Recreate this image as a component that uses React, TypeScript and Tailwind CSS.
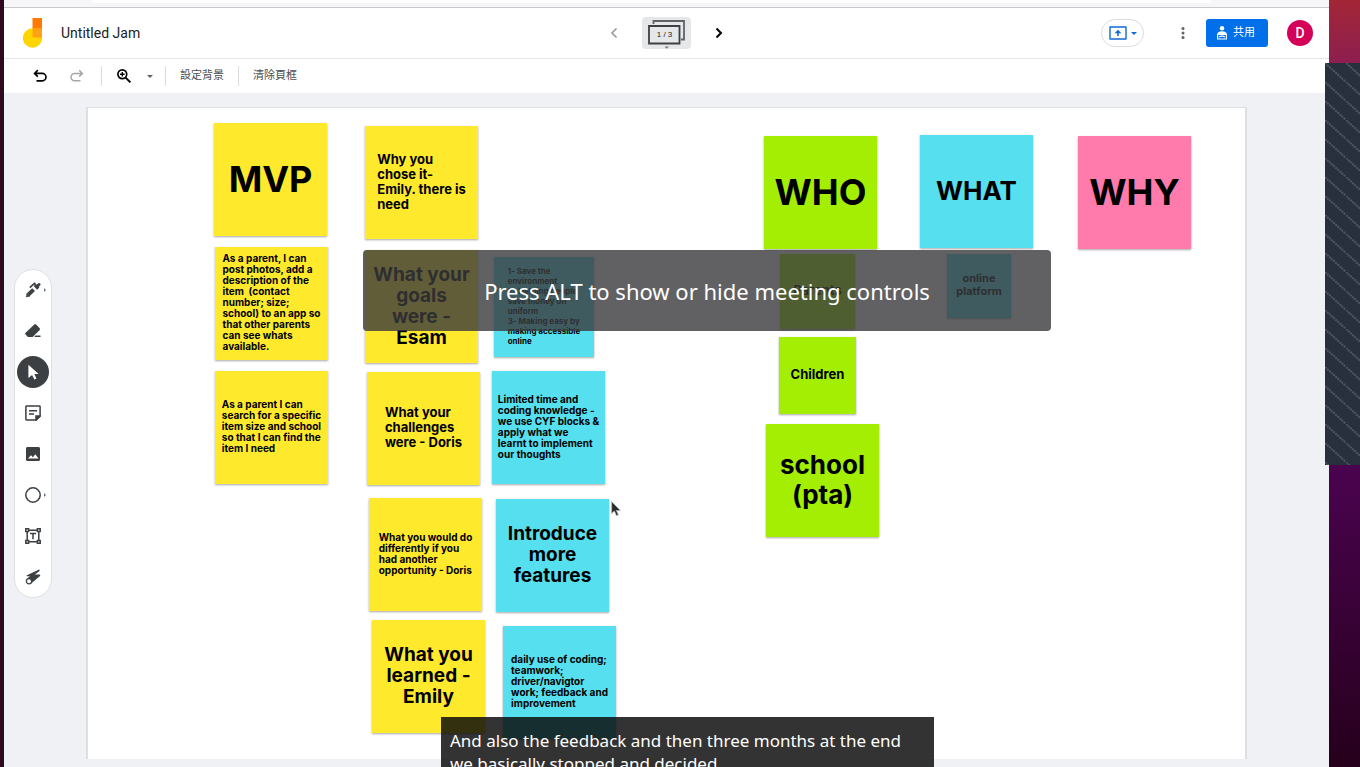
import React from 'react';

type Note = { box: string; type: string; color: string; lines: string[] };

const YELLOW = 'bg-[#ffe92c]';
const CYAN = 'bg-[#56dfee]';
const GREEN = 'bg-[#a3ee02]';
const PINK = 'bg-[#ff7bac]';

const HUGE = 'text-4xl leading-10 text-center';
const LARGE = 'text-[26px] leading-[30px] text-center';
const MEDIUM = 'text-[19px] leading-[21px] text-center';
const BODY = 'text-[13px] leading-[15px]';
const LABEL = 'text-[13px] leading-[15px] text-center';
const LABEL_SMALL = 'text-[11px] leading-[13px] text-center';
const SMALL = 'text-[10px] leading-[11px]';
const TINY = 'text-[8px] leading-[10px]';

const notes: Note[] = [
  { box: 'left-[126px] top-[15px] size-[113px]', type: HUGE, color: YELLOW, lines: ['MVP'] },
  { box: 'left-[277px] top-[18px] size-[113px]', type: BODY, color: YELLOW, lines: ['Why you', 'chose it-', 'Emily. there is', 'need'] },
  {
    box: 'left-[127px] top-[139px] size-[113px]', type: SMALL, color: YELLOW,
    lines: ['As a parent, I can', 'post photos, add a', 'description of the', 'item  (contact', 'number; size;', 'school) to an app so', 'that other parents', 'can see whats', 'available.'],
  },
  { box: 'left-[277px] top-[142px] size-[113px]', type: MEDIUM, color: YELLOW, lines: ['What your', 'goals', 'were -', 'Esam'] },
  {
    box: 'left-[406px] top-[149px] size-[100px]', type: TINY, color: CYAN,
    lines: ['1- Save the', 'environment', '2- Helping people', 'save money on', 'uniform', '3- Making easy by', 'making accessible', 'online'],
  },
  { box: 'left-[127px] top-[263px] size-[113px]', type: SMALL, color: YELLOW, lines: ['As a parent I can', 'search for a specific', 'item size and school', 'so that I can find the', 'item I need'] },
  { box: 'left-[279px] top-[264px] size-[113px]', type: BODY, color: YELLOW, lines: ['What your', 'challenges', 'were - Doris'] },
  {
    box: 'left-[404px] top-[263px] size-[113px]', type: SMALL, color: CYAN,
    lines: ['Limited time and', 'coding knowledge -', 'we use CYF blocks &', 'apply what we', 'learnt to implement', 'our thoughts'],
  },
  { box: 'left-[281px] top-[390px] size-[113px]', type: SMALL, color: YELLOW, lines: ['What you would do', 'differently if you', 'had another', 'opportunity - Doris'] },
  { box: 'left-[408px] top-[391px] size-[113px]', type: MEDIUM, color: CYAN, lines: ['Introduce', 'more', 'features'] },
  { box: 'left-[284px] top-[512px] size-[113px]', type: MEDIUM, color: YELLOW, lines: ['What you', 'learned -', 'Emily'] },
  { box: 'left-[415px] top-[518px] size-[113px]', type: SMALL, color: CYAN, lines: ['daily use of coding;', 'teamwork;', 'driver/navigtor', 'work; feedback and', 'improvement'] },
  { box: 'left-[676px] top-[28px] size-[113px]', type: HUGE, color: GREEN, lines: ['WHO'] },
  { box: 'left-[832px] top-[27px] size-[113px]', type: LARGE, color: CYAN, lines: ['WHAT'] },
  { box: 'left-[990px] top-[28px] size-[113px]', type: HUGE, color: PINK, lines: ['WHY'] },
  { box: 'left-[692px] top-[146px] size-[75px]', type: LABEL, color: GREEN, lines: ['Parents'] },
  { box: 'left-[859px] top-[146px] size-[64px]', type: LABEL_SMALL, color: CYAN, lines: ['online', 'platform'] },
  { box: 'left-[691px] top-[229px] size-[77px]', type: LABEL, color: GREEN, lines: ['Children'] },
  { box: 'left-[678px] top-[316px] size-[113px]', type: LARGE, color: GREEN, lines: ['school', '(pta)'] },
];

function StickyNote({ note }: { note: Note }) {
  return (
    <article className={`absolute flex items-center justify-center pb-[2px] shadow-[0_1px_2px_rgba(0,0,0,0.35)] ${note.box} ${note.color}`}>
      <p className={`whitespace-pre font-bold text-black ${note.type}`}>{note.lines.join('\n')}</p>
    </article>
  );
}

function Caret({ className }: { className: string }) {
  return (
    <svg viewBox="0 0 8 4" className={className} aria-hidden="true">
      <path d="M0 0h8L4 4z" fill="currentColor" />
    </svg>
  );
}

function Logo() {
  return (
    <svg viewBox="0 0 20 30" className="h-[30px] w-5" aria-hidden="true">
      <circle cx="9.5" cy="20" r="9.7" fill="#ffd500" />
      <path d="M9.5 0H19v10H9.5z" fill="#ff7a00" />
      <path d="M9.5 10H19v9.5H9.5z" fill="#ffa114" />
    </svg>
  );
}

const tools: { label: string; more?: boolean; active?: boolean; icon: React.ReactNode }[] = [
  {
    label: 'Pen',
    more: true,
    icon: (
      <g fill="none" stroke="currentColor">
        <path d="M3.200 12.800L8.600 7.600" strokeWidth="4" />
        <path d="M1 15.200l.6-4.200 3.600 3.500z" fill="currentColor" stroke="none" />
        <path d="M10.400 5.900l2.300-2.200" strokeWidth="5" strokeLinejoin="round" />
        <path d="M12.600 3.800l1.400-1.300" strokeWidth="3" strokeLinecap="round" />
        <path d="M4.800 5.600L9.400 1.400l1.200 1.200" strokeWidth="1.600" />
      </g>
    ),
  },
  {
    label: 'Eraser',
    icon: (
      <g fill="currentColor">
        <path d="M.6 9.700L9.300 1.600c.6-.5 1.200-.5 1.800 0l3.600 3.600c.5.6.5 1.200 0 1.800l-7 7H2.900L.6 11.600c-.6-.6-.6-1.300 0-1.900z" />
        <path d="M10.500 12.600h5V14h-6.300z" />
      </g>
    ),
  },
  { label: 'Select', active: true, icon: <path d="M3.400.8l10.200 9.100H9.300l2.200 4.500-2.200 1-2.200-4.500-3.700 3z" fill="currentColor" /> },
  {
    label: 'Sticky note',
    icon: (
      <g fill="none" stroke="currentColor" strokeWidth="1.500">
        <path d="M1.600 1h12.800c.4 0 .7.3.7.7v9.400L11.200 15H1.600c-.4 0-.7-.3-.7-.7V1.700c0-.4.3-.7.7-.7z" />
        <path d="M4 5.800h8M4 9h5" />
        <path d="M11 15v-4h4z" fill="currentColor" />
      </g>
    ),
  },
  {
    label: 'Add image',
    icon: <path fillRule="evenodd" fill="currentColor" d="M2.500 1h11c.8 0 1.500.7 1.500 1.500v11c0 .8-.7 1.500-1.500 1.500h-11C1.700 15 1 14.300 1 13.500v-11C1 1.700 1.700 1 2.500 1zM3 12.500h10.500L10.300 8.200l-2.400 3-1.900-2z" />,
  },
  { label: 'Shape', more: true, icon: <circle cx="8" cy="8" r="7.200" fill="none" stroke="currentColor" strokeWidth="1.500" /> },
  {
    label: 'Text box',
    icon: (
      <g fill="none" stroke="currentColor" strokeWidth="1.500">
        <path d="M3 2.200h10M3 13.800h10M2.200 3v10M13.800 3v10M5 5.500h6M8 5.500v5.700" />
        <path d="M.8.800h2.800v2.800H.8zM12.400.800h2.800v2.800h-2.800zM.8 12.400h2.800v2.800H.8zM12.400 12.400h2.800v2.800h-2.800z" fill="white" />
      </g>
    ),
  },
  {
    label: 'Laser',
    icon: (
      <g>
        <path d="M2 6.200L13.600.7c1-.4 1.600.9.700 1.500L9.800 5.400l4.600.1c1 .1 1.200 1.200.4 1.700L7 13.800 2.200 9.500l2.700-2.300H2.300c-.8 0-1-.7-.3-1z" fill="currentColor" />
        <circle cx="4" cy="12.200" r="2.600" fill="white" stroke="currentColor" strokeWidth="1.300" />
      </g>
    ),
  },
];

function ToolRail() {
  return (
    <nav aria-label="Tools" className="flex flex-col gap-[9px] rounded-full border border-[#dfe1e5] bg-white px-[2px] py-1">
      {tools.map((tool) => (
        <button
          key={tool.label}
          type="button"
          aria-label={tool.label}
          className={`relative flex size-8 items-center justify-center rounded-full ${tool.active ? 'bg-[#3c4043] text-white' : 'text-[#3c4043]'}`}
        >
          <svg viewBox="0 0 16 16" className="size-4" aria-hidden="true">{tool.icon}</svg>
          {tool.more && <Caret className="absolute right-[2px] top-[15px] h-[2px] w-1 -rotate-90 text-gray-500" />}
        </button>
      ))}
    </nav>
  );
}

function Header() {
  return (
    <header className="grid h-[51px] shrink-0 grid-cols-[1fr_auto_1fr] items-center border-b border-[#e4e5e7] bg-white">
      <div className="flex items-center gap-[18px] pl-[19px]">
        <Logo />
        <h1 className="text-sm text-[#202124]">Untitled Jam</h1>
      </div>
      <div className="flex items-center gap-5">
        <button type="button" aria-label="Previous frame" className="flex size-4 items-center justify-center text-[#9a9a9a]">
          <svg viewBox="0 0 16 16" className="size-4" fill="none" stroke="currentColor" strokeWidth="1.700" aria-hidden="true"><path d="M10.500 3.500L6 8l4.500 4.500" /></svg>
        </button>
        <button type="button" aria-label="Frame 1 of 3" className="relative flex h-8 w-[49px] items-center justify-center rounded bg-[#e6e7e9] font-['Liberation_Sans',sans-serif] text-[8px] text-[#202124]">
          <svg viewBox="0 0 49 32" className="absolute inset-0 h-8 w-[49px]" fill="none" aria-hidden="true">
            <path d="M11.500 7V4H42v18.500h-3" stroke="#5f6368" strokeWidth="1.800" />
            <path d="M7 9h30.500v17.500H7z" stroke="#3c4043" strokeWidth="1.800" />
            <path d="M22.500 29.500h4.500l-2.200 2.200z" fill="#777" />
          </svg>
          <span className="relative pr-1 pt-[3px]">1 / 3</span>
        </button>
        <button type="button" aria-label="Next frame" className="flex size-4 items-center justify-center text-black">
          <svg viewBox="0 0 16 16" className="size-4" fill="none" stroke="currentColor" strokeWidth="2" aria-hidden="true"><path d="M5.500 3.500L10 8l-4.500 4.500" /></svg>
        </button>
      </div>
      <div className="flex items-center justify-end pr-4">
        <button type="button" aria-label="Present" className="flex h-7 w-[43px] items-center justify-center gap-1 rounded-full border border-[#dadce0] text-[#1268d8]">
          <svg viewBox="0 0 18 14" className="h-[14px] w-[18px]" aria-hidden="true">
            <path d="M1 1h16v12H1z" fill="none" stroke="currentColor" strokeWidth="1.400" strokeLinejoin="round" />
            <path d="M9 3.700L5.600 7.200h2.600V10h1.600V7.200h2.600z" fill="currentColor" />
          </svg>
          <Caret className="h-[3px] w-[6px]" />
        </button>
        <button type="button" aria-label="More options" className="ml-[27px] mr-[11px] flex size-6 items-center justify-center text-[#5f6368]">
          <svg viewBox="0 0 4 14" className="h-[14px] w-1" fill="currentColor" aria-hidden="true">
            <circle cx="2" cy="2.500" r="1.500" /><circle cx="2" cy="7" r="1.500" /><circle cx="2" cy="11.500" r="1.500" />
          </svg>
        </button>
        <button type="button" className="mr-[19px] flex h-7 w-[62px] items-center justify-center gap-[6px] rounded-[3px] bg-[#0070ea] pr-[2px] text-[11px] text-white">
          <svg viewBox="0 0 10 14" className="h-[14px] w-[10px]" aria-hidden="true">
            <circle cx="5" cy="2.200" r="2.200" fill="white" />
            <path d="M0 9c0-2.600 2-3.700 5-3.700S10 6.400 10 9z" fill="white" />
            <path d="M.6 9v4h8.800V9M2 11.200c1.500-1.400 4.500-1.400 6 0" fill="none" stroke="white" strokeWidth="1.100" />
          </svg>
          共用
        </button>
        <button type="button" aria-label="Account" className="flex size-[26px] items-center justify-center rounded-full bg-[#d50057] text-sm font-medium text-white">D</button>
      </div>
    </header>
  );
}

function EditBar() {
  return (
    <div role="toolbar" aria-label="Edit" className="flex h-[34px] shrink-0 items-center bg-white text-[11px] text-[#4a4d51]">
      <button type="button" aria-label="Undo" className="ml-7 flex size-4 items-center justify-center text-black">
        <svg viewBox="0 0 16 16" className="size-4" fill="none" stroke="currentColor" strokeWidth="1.700" aria-hidden="true">
          <path d="M5.800 2.200L2.600 5.400l3.200 3.200M2.600 5.400h7.700a3.700 3.700 0 0 1 0 7.400H4.500" />
        </svg>
      </button>
      <button type="button" aria-label="Redo" className="ml-[21px] flex size-4 items-center justify-center text-[#a6a6a6]">
        <svg viewBox="0 0 16 16" className="size-4" fill="none" stroke="currentColor" strokeWidth="1.500" aria-hidden="true">
          <path d="M10.200 2.200l3.200 3.200-3.200 3.200M13.400 5.400H5.700a3.700 3.700 0 0 0 0 7.400h5.800" />
        </svg>
      </button>
      <span className="ml-4 h-5 w-px bg-[#dadce0]" />
      <button type="button" aria-label="Zoom" className="ml-[14px] flex size-4 items-center justify-center text-black">
        <svg viewBox="0 0 16 16" className="size-4" fill="none" stroke="currentColor" aria-hidden="true">
          <circle cx="6.300" cy="6.200" r="4.400" strokeWidth="1.700" />
          <path d="M9.600 9.600l4.800 4.800" strokeWidth="2" />
          <path d="M6.300 3.900v4.600M4 6.200h4.600" strokeWidth="1.400" />
        </svg>
      </button>
      <button type="button" aria-label="Zoom level" className="ml-2 flex size-5 items-center justify-center text-[#5f6368]">
        <Caret className="h-[3px] w-[6px]" />
      </button>
      <span className="ml-[5px] h-5 w-px bg-[#dadce0]" />
      <button type="button" className="ml-[14px]">設定背景</button>
      <span className="ml-[14px] h-5 w-px bg-[#dadce0]" />
      <button type="button" className="ml-[14px]">清除頁框</button>
    </div>
  );
}

function PatternPanel() {
  return (
    <div className="absolute right-0 top-[63px] h-[402px] w-[35px] bg-[#28303d]">
      <svg className="size-full" aria-hidden="true">
        <defs>
          <pattern id="stripes" width="21" height="19" patternUnits="userSpaceOnUse">
            <path d="M0 0l21 19" stroke="#4f5662" strokeWidth="2" strokeDasharray="2 0.800" />
          </pattern>
        </defs>
        <rect width="100%" height="100%" fill="url(#stripes)" />
      </svg>
    </div>
  );
}

export default function App() {
  return (
    <div className="relative h-screen overflow-hidden bg-[linear-gradient(to_bottom,#a32636,#8d1f4f_8%,#4b0350_60%,#26001c)] pr-[31px] font-[Roboto,'Noto_Sans_CJK_TC',sans-serif]">
      <div className="flex h-full bg-[#2c0b1f] pl-1">
        <div className="flex min-w-0 flex-1 flex-col bg-[#eff1f5]">
          <div className="h-2 shrink-0 border-b border-[#c9cacc] bg-[#f6f6f8] pl-[88px] pr-[118px]">
            <div className="h-[3px] rounded-bl-lg bg-white" />
          </div>
          <Header />
          <EditBar />
          <main className="flex min-h-0 flex-1 items-center pb-2 pl-[10px] pr-[82px] pt-[14px]">
            <ToolRail />
            <section aria-label="Frame" className="relative ml-[34px] h-full flex-1 border-x-2 border-t border-[#dddfe4] bg-white font-[Inter,sans-serif]">
              {notes.map((note) => (
                <StickyNote key={note.lines[0]} note={note} />
              ))}
              <svg viewBox="0 0 10 16" className="absolute left-[523px] top-[393px] h-4 w-[10px]" aria-hidden="true">
                <path d="M.6.600v12l2.800-2.500 2 4.600 2-.9-2-4.300h4z" fill="#2b2b2b" stroke="#bbb" strokeWidth=".8" />
              </svg>
            </section>
          </main>
        </div>
      </div>
      <PatternPanel />
      <div role="status" className="absolute left-[363px] top-[250px] flex h-[81px] w-[688px] items-center justify-center rounded bg-[#39393c]/80 font-['Noto_Sans',sans-serif] text-[22px] leading-7 text-white">
        Press ALT to show or hide meeting controls
      </div>
      <p className="absolute left-[441px] top-[717px] w-[493px] bg-[#0a0a0a]/83 px-[9px] pb-3 pt-3 font-['Noto_Sans',sans-serif] text-[17px] leading-[23px] text-white">
        And also the feedback and then three months at the end
        <br />
        we basically stopped and decided
      </p>
    </div>
  );
}
